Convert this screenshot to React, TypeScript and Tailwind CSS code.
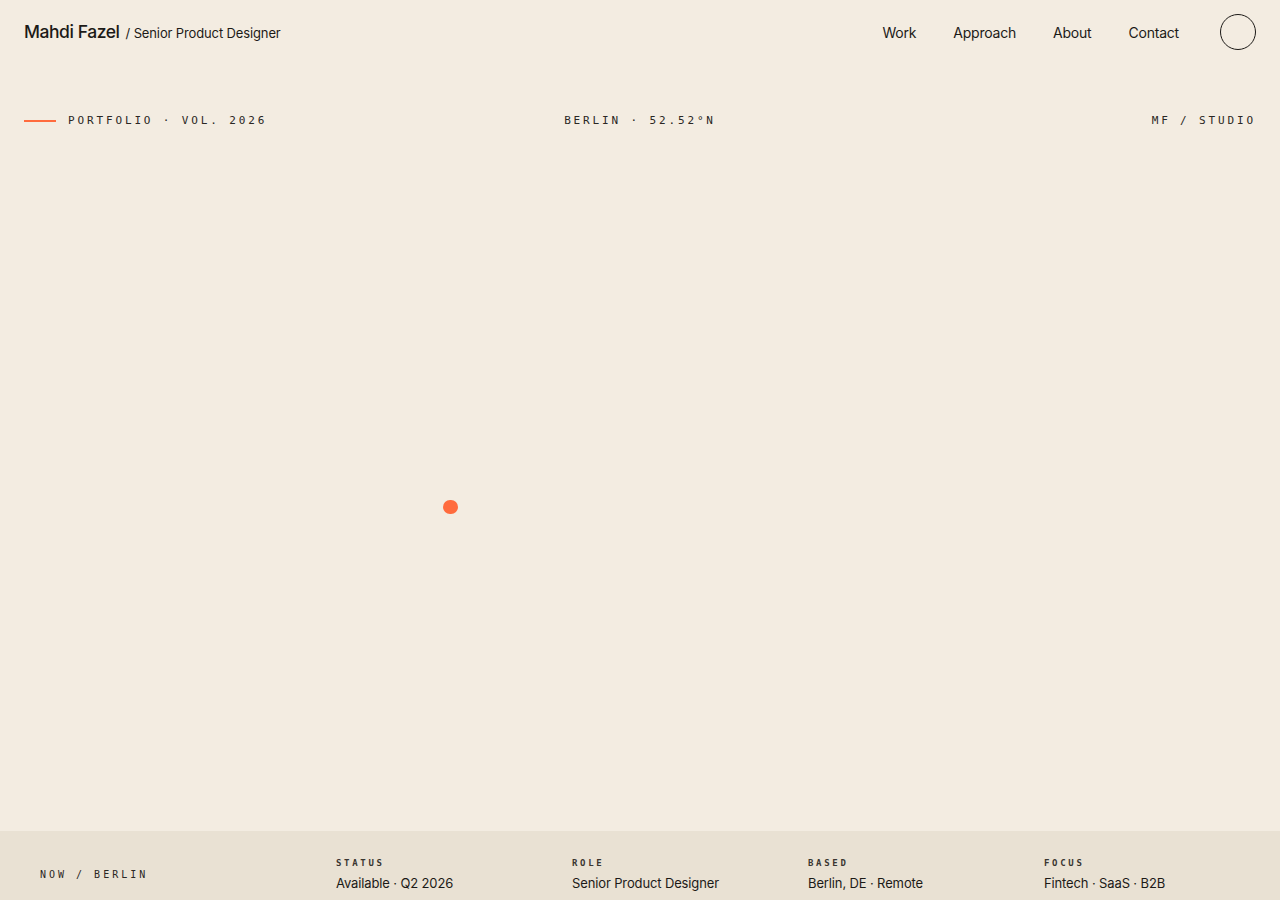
import React from 'react';

const sans = { fontFamily: 'Inter, "Noto Sans", sans-serif' };

const facts = [
  { label: 'STATUS', value: 'Available · Q2 2026' },
  { label: 'ROLE', value: 'Senior Product Designer' },
  { label: 'BASED', value: 'Berlin, DE · Remote' },
  { label: 'FOCUS', value: 'Fintech · SaaS · B2B' },
];

const navLinks = ['Work', 'Approach', 'About', 'Contact'];

export default function App() {
  return (
    <div className="min-h-screen bg-[#f3ece1] text-[#1c1a17] flex flex-col" style={sans}>
      {/* Header */}
      <header className="h-16 px-6 flex items-center justify-between">
        <div className="flex items-baseline gap-[6px]">
          <span className="text-[17.5px] font-medium tracking-[-0.025em]">Mahdi Fazel</span>
          <span className="text-[13px] tracking-[-0.01em]">/ Senior Product Designer</span>
        </div>
        <nav className="flex items-center">
          <div className="flex items-center gap-[37px] text-[14px] tracking-[-0.015em]">
            {navLinks.map((link) => (
              <a key={link} href="#" className="hover:text-[#ff6b3d]">
                {link}
              </a>
            ))}
          </div>
          <button className="ml-[41px] w-9 h-9 rounded-full border border-[#1c1a17]" aria-label="Menu" />
        </nav>
      </header>

      {/* Hero */}
      <main className="relative h-[767px] px-6 pt-[49px]">
        <div className="grid grid-cols-3 items-center font-['DejaVu_Sans_Mono',monospace] text-[11px] leading-4 tracking-[0.26em] text-[#2a2724]">
          <div className="flex items-center gap-3">
            <span className="w-8 h-[2px] bg-[#ff6b3d]" />
            <span>PORTFOLIO · VOL. 2026</span>
          </div>
          <div className="text-center">BERLIN · 52.52°N</div>
          <div className="text-right">MF / STUDIO</div>
        </div>

        {/* cursor dot */}
        <span className="absolute left-[443px] top-[436px] w-[15px] h-[14px] rounded-full bg-[#ff6b3d]" />
      </main>

      {/* Footer strip */}
      <footer className="h-[69px] bg-[#e9e1d3] pl-10 grid grid-cols-[296px_236px_236px_236px_1fr] overflow-hidden">
        <div className="pt-[38px] font-['DejaVu_Sans_Mono',monospace] text-[10px] leading-3 tracking-[0.3em] text-[#2a2724]">
          NOW / BERLIN
        </div>
        {facts.map((f) => (
          <div key={f.label} className="pt-[26px]">
            <div className="font-['DejaVu_Sans_Mono',monospace] font-bold text-[9px] leading-3 tracking-[0.3em] text-[#3a3631]">
              {f.label}
            </div>
            <div className="mt-1 text-[13px] leading-5 tracking-[-0.01em]">{f.value}</div>
          </div>
        ))}
      </footer>
    </div>
  );
}
